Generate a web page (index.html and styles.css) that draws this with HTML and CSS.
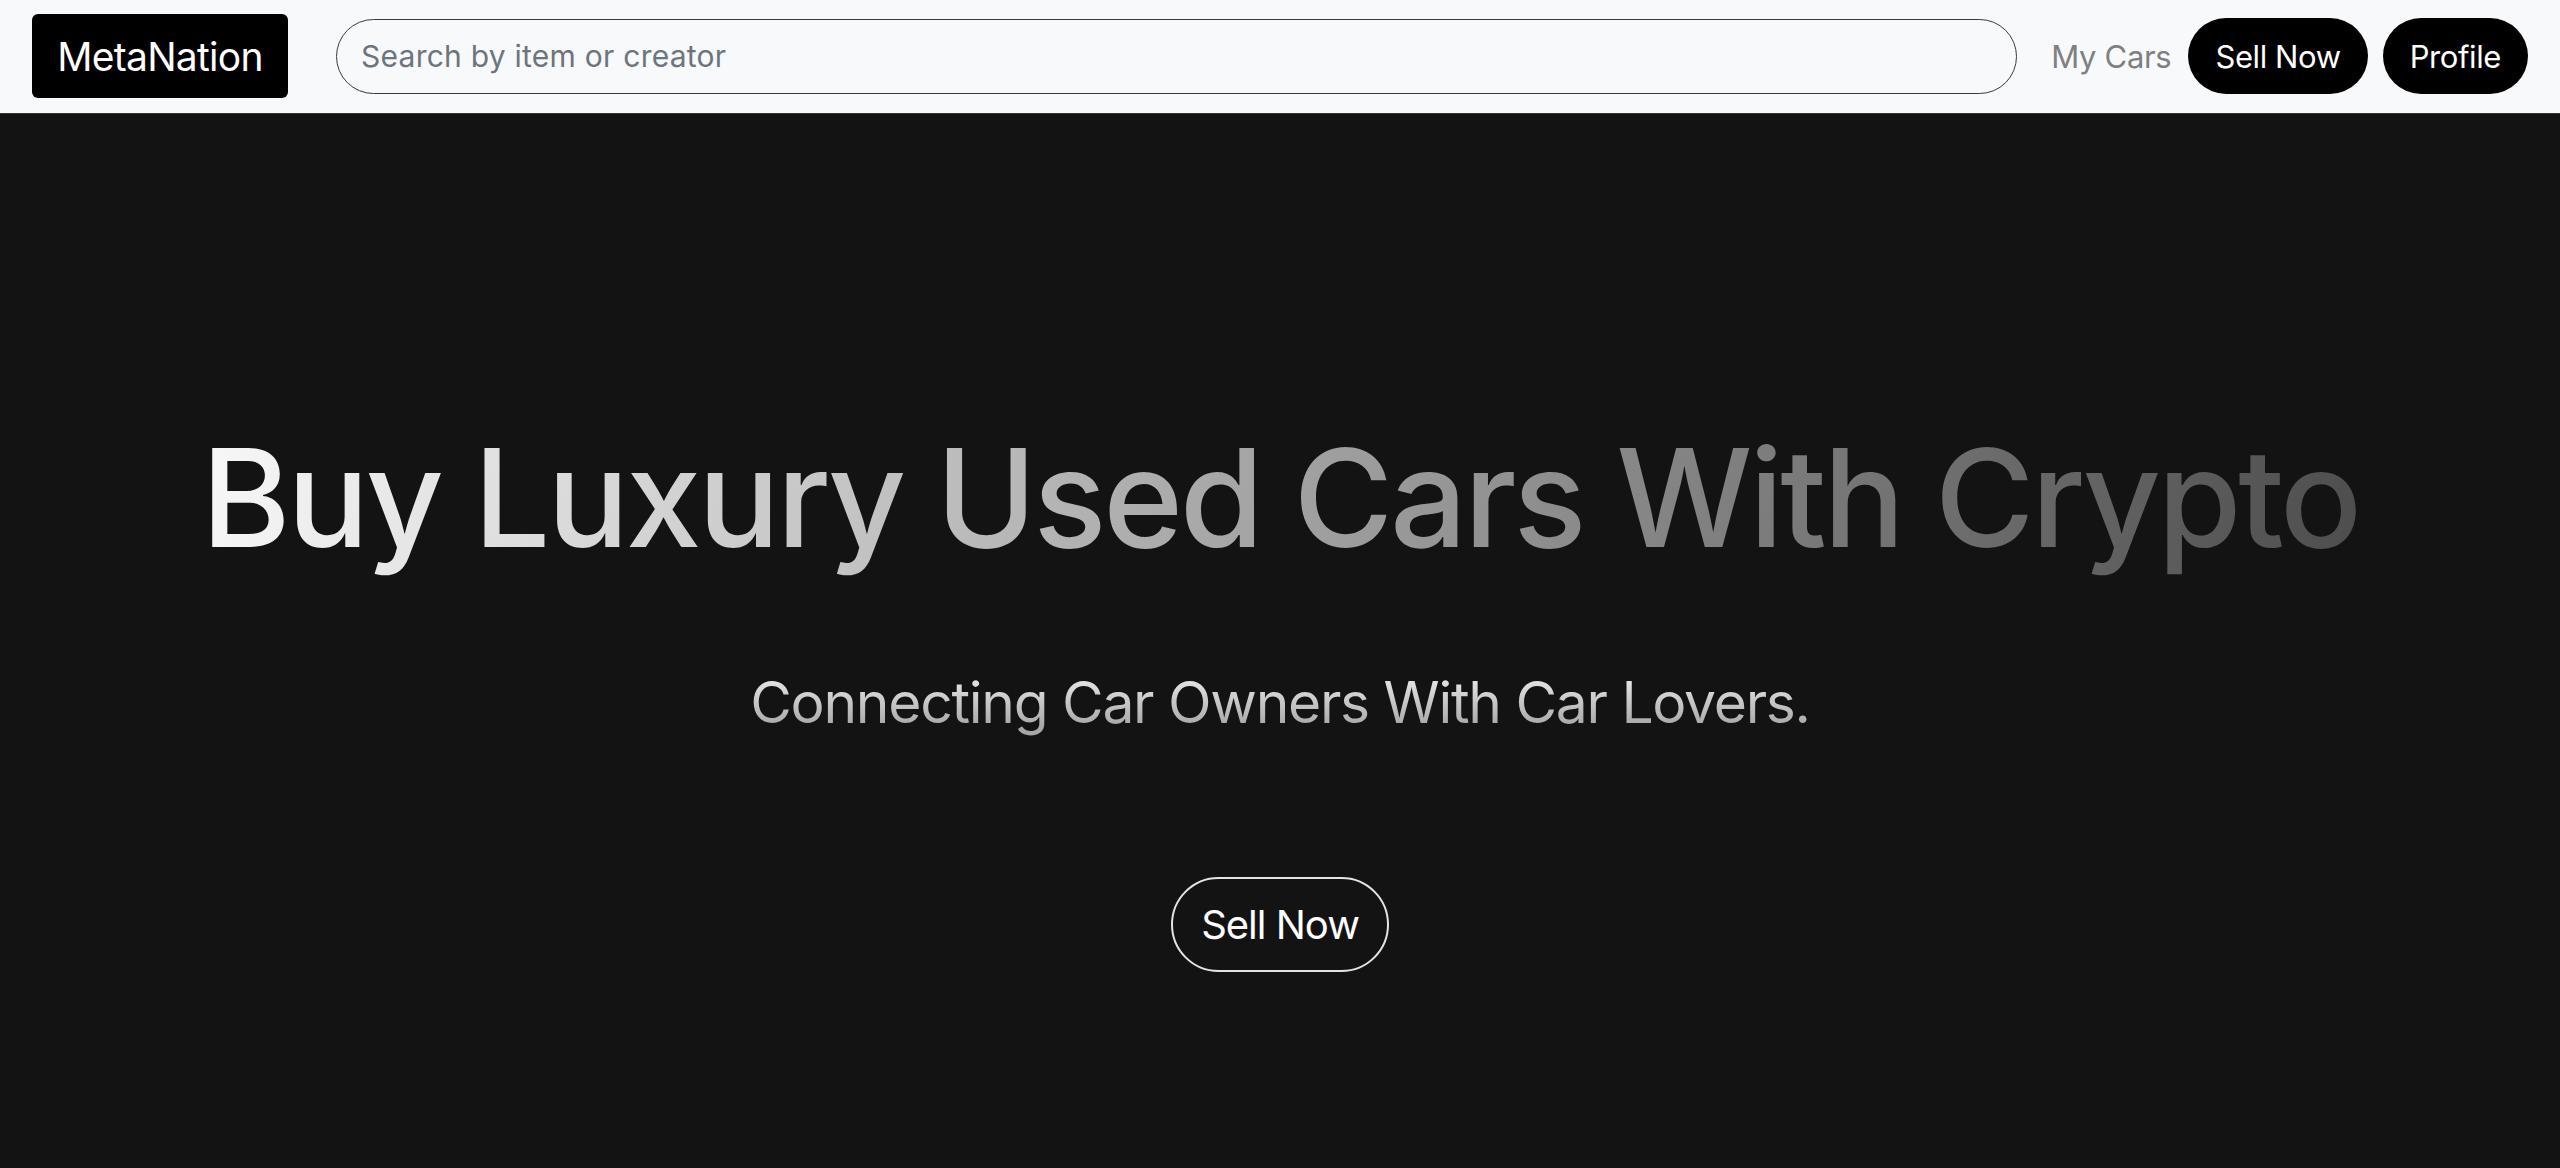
FILE: index.html
```html
<!DOCTYPE html>
<html lang="en">
<head>
<meta charset="utf-8">
<title>MetaNation</title>
<link rel="stylesheet" href="styles.css">
</head>
<body>
<header class="navbar">
  <a class="brand" href="#">MetaNation</a>
  <input class="search" type="text" placeholder="Search by item or creator">
  <nav class="nav-links">
    <a class="nav-link" href="#">My Cars</a>
    <a class="pill-btn" href="#">Sell Now</a>
    <a class="pill-btn" href="#">Profile</a>
  </nav>
</header>
<main class="hero">
  <h1 class="hero-title">Buy Luxury Used Cars With Crypto</h1>
  <p class="hero-sub">Connecting Car Owners With Car Lovers.</p>
  <a class="outline-btn" href="#">Sell Now</a>
</main>
</body>
</html>
```
FILE: styles.css
```css
* { box-sizing: border-box; }
html, body { margin: 0; padding: 0; }
body {
  font-family: Inter, "Noto Sans", "Liberation Sans", sans-serif;
  background: #131313;
  min-height: 1168px;
}
a { text-decoration: none; }

.navbar {
  display: flex;
  align-items: center;
  height: 114px;
  padding: 0 32px 1px 32px;
  background: #f8f9fa;
  border-bottom: 1px solid #32363a;
}
.brand {
  display: flex;
  align-items: center;
  justify-content: center;
  width: 256px;
  height: 84px;
  background: #000;
  color: #fff;
  font-size: 39px;
  letter-spacing: -0.7px;
  border-radius: 6px;
  margin-right: 48px;
}
.search {
  flex: 1;
  height: 75px;
  border: 1.5px solid #3a3a3a;
  border-radius: 38px;
  background: #f8f9fa;
  padding: 0 24px;
  font-family: inherit;
  font-size: 30px;
  letter-spacing: 0.25px;
  color: #212529;
  outline: none;
  margin-right: 34px;
}
.search::placeholder { color: #6c757d; }
.nav-links {
  display: flex;
  align-items: center;
}
.nav-link {
  color: #7f8081;
  font-size: 31px;
  letter-spacing: -0.3px;
  margin-right: 17px;
}
.pill-btn {
  display: flex;
  align-items: center;
  justify-content: center;
  height: 76px;
  padding: 0 27px;
  background: #000;
  color: #fff;
  border-radius: 38px;
  font-size: 31px;
  letter-spacing: -0.4px;
}
.pill-btn + .pill-btn { margin-left: 15px; }

.hero {
  display: flex;
  flex-direction: column;
  align-items: center;
  padding-top: 299px;
  min-height: 1054px;
  background: #131313;
}
.hero-title {
  margin: 0;
  font-size: 136px;
  line-height: 1.25;
  font-weight: 500;
  letter-spacing: -3.3px;
  background: linear-gradient(100deg, #f8f8f8 0%, #4d4d4d 100%);
  -webkit-background-clip: text;
  background-clip: text;
  color: transparent;
}
.hero-sub {
  margin: 84px 0 0 0;
  font-size: 57px;
  line-height: 1.25;
  font-weight: 400;
  letter-spacing: -1.3px;
  background: linear-gradient(180deg, #e2e2e2 20%, #a6a6a6 85%);
  -webkit-background-clip: text;
  background-clip: text;
  color: transparent;
}
.outline-btn {
  margin-top: 139px;
  display: flex;
  align-items: center;
  justify-content: center;
  width: 218px;
  height: 95px;
  border: 2px solid #e4e4e4;
  border-radius: 48px;
  color: #fff;
  font-size: 40px;
  letter-spacing: -1px;
}
```
